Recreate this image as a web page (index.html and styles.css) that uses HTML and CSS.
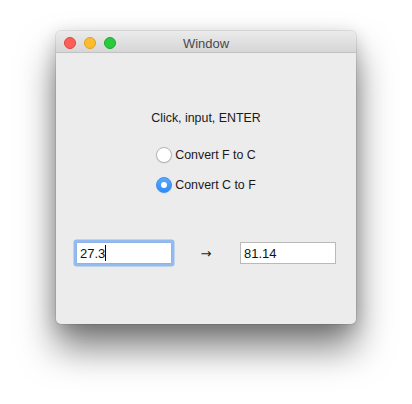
FILE: index.html
```html
<!DOCTYPE html>
<html>
<head>
<meta charset="utf-8">
<link rel="stylesheet" href="styles.css">
</head>
<body>
<div class="window">
  <div class="titlebar">
    <div class="lights">
      <span class="light red"></span>
      <span class="light yellow"></span>
      <span class="light green"></span>
    </div>
    <div class="title">Window</div>
  </div>
  <div class="content">
    <div class="label">Click, input, ENTER</div>
    <div class="radios">
      <div class="radio-row"><span class="radio"></span><span class="radio-text">Convert F to C</span></div>
      <div class="radio-row"><span class="radio checked"></span><span class="radio-text">Convert C to F</span></div>
    </div>
    <div class="fields">
      <div class="field focused"><span class="value">27.3</span><span class="caret"></span></div>
      <div class="arrow">→</div>
      <div class="field"><span class="value">81.14</span></div>
    </div>
  </div>
</div>
</body>
</html>
```
FILE: styles.css
```css
html, body {
  margin: 0;
  padding: 0;
  background: #ffffff;
}
body {
  width: 412px;
  height: 404px;
  overflow: hidden;
  font-family: "Liberation Sans", Arial, sans-serif;
  font-size: 12.4px;
  color: #1a1a1a;
}
.window {
  margin: 31px 0 0 56px;
  width: 300px;
  height: 293px;
  border-radius: 5px;
  background: #ececec;
  box-shadow: 0 24px 36px rgba(0, 0, 0, 0.5), 0 4px 18px rgba(0, 0, 0, 0.18), 0 0 0 1px rgba(0, 0, 0, 0.08);
  display: flex;
  flex-direction: column;
}
.titlebar {
  height: 21px;
  border-bottom: 1px solid #c2c2c2;
  border-radius: 5px 5px 0 0;
  background: linear-gradient(#ebebeb, #d6d6d6);
  display: grid;
  grid-template-columns: 1fr;
  align-items: center;
}
.lights, .title {
  grid-area: 1 / 1;
}
.lights {
  display: flex;
  gap: 8px;
  padding-left: 8px;
  padding-top: 3px;
  align-items: center;
}
.light {
  width: 12px;
  height: 12px;
  border-radius: 50%;
  box-sizing: border-box;
}
.red { background: #fc5f57; border: 0.5px solid #e0443e; }
.yellow { background: #fdbc2e; border: 0.5px solid #dea123; }
.green { background: #29c940; border: 0.5px solid #1aab29; }
.title {
  text-align: center;
  color: #4a4a4a;
  font-size: 13px;
  padding-top: 3px;
}
.content {
  flex: 1;
  display: flex;
  flex-direction: column;
  align-items: center;
  padding-top: 57px;
}
.label {
  line-height: 16px;
}
.radios {
  margin-top: 20px;
  display: flex;
  flex-direction: column;
  gap: 12px;
}
.radio-row {
  display: flex;
  align-items: center;
  height: 18px;
  gap: 3px;
}
.radio {
  width: 16px;
  height: 16px;
  border-radius: 50%;
  box-sizing: border-box;
  background: #ffffff;
  border: 1px solid #b5b5b5;
  box-shadow: 0 0.5px 1px rgba(0,0,0,0.12);
  display: flex;
  align-items: center;
  justify-content: center;
}
.radio.checked {
  background: linear-gradient(#5aa9fc, #2f8cf7);
  border-color: #3a8ff0;
}
.radio.checked::after {
  content: "";
  width: 6px;
  height: 6px;
  border-radius: 50%;
  background: #ffffff;
}
.fields {
  align-self: stretch;
  margin-top: 48px;
  padding: 0 20px;
  display: grid;
  grid-template-columns: 96px 1fr 96px;
  align-items: center;
}
.field {
  height: 22px;
  box-sizing: border-box;
  background: #ffffff;
  border: 1px solid #b9b9b9;
  display: flex;
  align-items: center;
  padding-left: 3px;
  color: #111;
  font-size: 13px;
}
.field.focused {
  border-color: #8eb3e6;
  box-shadow: 0 0 0 2.5px #94bbf0;
  border-radius: 1px;
}
.caret {
  width: 1px;
  height: 16px;
  background: #000;
}
.arrow {
  text-align: center;
  font-family: "DejaVu Sans", sans-serif;
  font-size: 13px;
  color: #222;
}
```
